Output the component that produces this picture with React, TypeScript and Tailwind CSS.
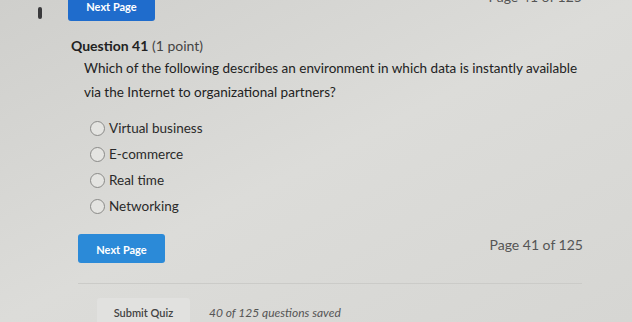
const options = ["Virtual business", "E-commerce", "Real time", "Networking"];

const Radio = () => (
  <span className="inline-block w-[15px] h-[15px] rounded-full border border-[#8a8a88] bg-[#e4e4e1] shrink-0" />
);

export default function App() {
  return (
    <div
      className="w-[632px] h-[322px] overflow-hidden bg-gradient-to-br from-[#cfcfcc] via-[#dcdcd9] to-[#d6d6d3] text-[#2a2a2a]"
      style={{ fontFamily: "Lato, 'Open Sans', sans-serif" }}
    >
      {/* top strip (previous page, cropped) */}
      <div className="flex items-start h-[22px]">
        <div className="ml-[38px] mt-[7px] w-[4px] h-[12px] rounded-full bg-[#3a3a3c]" />
        <div className="ml-[26px] -mt-[6px] w-[87px] h-[27px] rounded-[3px] bg-[#1f6ccc] flex items-center justify-center text-[11px] font-bold text-white">
          Next Page
        </div>
        <div className="ml-auto mr-[50px] -mt-[14px] text-[14px] text-[#555]">Page 41 of 125</div>
      </div>

      <div className="ml-[71px] mt-[15px] text-[14px] leading-[18px]">
        <span className="font-bold text-[#222]">Question 41</span>{" "}
        <span className="text-[#444]">(1 point)</span>
      </div>

      <div className="ml-[84px] mt-[1px] text-[13.5px] leading-[24px] text-[#222]">
        <p>Which of the following describes an environment in which data is instantly available</p>
        <p>via the Internet to organizational partners?</p>
      </div>

      <div className="ml-[90px] mt-[17px] flex flex-col gap-[11px]">
        {options.map((o) => (
          <label key={o} className="flex items-center gap-[4px] h-[15px] text-[13.5px] text-[#2a2a2a]">
            <Radio />
            <span>{o}</span>
          </label>
        ))}
      </div>

      <div className="flex items-center ml-[78px] mr-[49px] mt-[20px]">
        <button className="w-[87px] h-[29px] rounded-[3px] bg-[#2b8ad8] text-white text-[11px] font-bold pt-[3px]">
          Next Page
        </button>
        <span className="ml-auto -mt-[8px] text-[14px] text-[#555]">Page 41 of 125</span>
      </div>

      <div className="ml-[78px] mr-[50px] mt-[20px] h-px bg-[#cbcbc8]" />

      <div className="flex items-center ml-[97px] mt-[14px]">
        <div className="w-[93px] h-[30px] rounded-t-[3px] bg-[#e1e1df] flex items-center justify-center text-[11px] font-semibold text-[#444]">
          Submit Quiz
        </div>
        <span className="ml-[19px] text-[12px] italic text-[#555]">40 of 125 questions saved</span>
      </div>
    </div>
  );
}
